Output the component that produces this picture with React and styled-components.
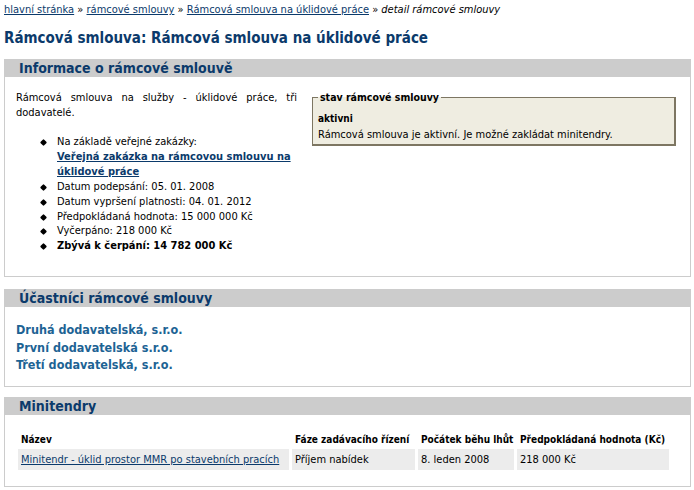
import React from "react";
import styled, { createGlobalStyle } from "styled-components";

const Global = createGlobalStyle`
  html, body { margin: 0; padding: 0; background: #fff; }
  body {
    font-family: "DejaVu Sans Condensed", "DejaVu Sans", sans-serif;
    font-stretch: condensed;
    color: #000;
    font-size: 11px;
  }
`;

const Page = styled.div`
  padding: 3px 3px 0 4px;
`;

const Crumbs = styled.div`
  font-size: 11px;
  line-height: 14px;
  a { color: #0b3a6b; }
  em { font-style: italic; }
`;

const Title = styled.h1`
  margin: 11px 0 0 0;
  font-size: 15px;
  line-height: 20px;
  font-weight: bold;
  color: #0b3a6b;
`;

const Section = styled.section`
  margin-top: ${(p) => p.$top}px;
`;

const Head = styled.h2`
  margin: 0;
  height: 18px;
  line-height: 18px;
  padding-left: 15px;
  background: #cccccc;
  color: #0b3a6b;
  font-size: 14px;
  font-weight: bold;
`;

const Body = styled.div`
  border: 1px solid #cccccc;
  border-top: none;
  padding: ${(p) => p.$pad};
  min-height: ${(p) => p.$min || 0}px;
  box-sizing: border-box;
`;

const InfoRow = styled.div`
  display: flex;
  align-items: flex-start;
  gap: 15px;
`;

const LeftCol = styled.div`
  width: 281px;
  flex: none;
`;

const Para = styled.p`
  margin: 0;
  text-align: justify;
  line-height: 15px;
`;

const Bullets = styled.ul`
  margin: 15px 0 0 0;
  padding-left: 25px;
  list-style: none;
`;

const Item = styled.li`
  position: relative;
  line-height: 14.9px;
  padding-left: 16px;
  font-weight: ${(p) => (p.$bold ? "bold" : "normal")};
  &::before {
    content: "";
    position: absolute;
    left: 0;
    top: 5px;
    width: 5px;
    height: 5px;
    background: #000;
    transform: rotate(45deg);
    border-radius: 1px;
  }
  a { color: #0b3a6b; font-weight: bold; }
`;

const Fieldset = styled.fieldset`
  margin: 1px 0 0 0;
  width: 364px;
  box-sizing: border-box;
  padding: 8px 6px 1px 5px;
  background: #efede1;
  border-style: solid;
  border-width: 1px 2px 2px 1px;
  border-color: #7d7662;
  legend {
    font-weight: bold;
    font-size: 10.5px;
    padding: 0 2px;
    margin-left: 0;
  }
  strong { display: block; font-size: 10px; line-height: 16px; }
  div { line-height: 16px; }
`;

const Participants = styled.div`
  display: flex;
  flex-direction: column;
  a {
    color: #1d6394;
    font-weight: bold;
    font-size: 12.5px;
    line-height: 17.5px;
    text-decoration: none;
  }
`;

const Table = styled.table`
  border-collapse: separate;
  border-spacing: 3px 0;
  margin-left: -1px;
  table-layout: fixed;
  th {
    text-align: left;
    font-weight: bold;
    font-size: 10px;
    line-height: 15px;
    padding: 0 0 2px 3px;
    white-space: nowrap;
  }
  td {
    background: #ececec;
    height: 21px;
    padding: 0 3px;
    white-space: nowrap;
  }
  td a { color: #0b3a6b; }
`;

const Col = styled.col`
  width: ${(p) => p.$w}px;
`;

export default function App() {
  return (
    <Page>
      <Global />
      <Crumbs>
        <a href="#">hlavní stránka</a> » <a href="#">rámcové smlouvy</a> »{" "}
        <a href="#">Rámcová smlouva na úklidové práce</a> » <em>detail rámcové smlouvy</em>
      </Crumbs>
      <Title>Rámcová smlouva: Rámcová smlouva na úklidové práce</Title>

      <Section $top={11}>
        <Head>Informace o rámcové smlouvě</Head>
        <Body $pad="13px 14px 14px 11px" $min={200}>
          <InfoRow>
            <LeftCol>
              <Para>Rámcová smlouva na služby - úklidové práce, tři dodavatelé.</Para>
              <Bullets>
                <Item>
                  Na základě veřejné zakázky:
                  <br />
                  <a href="#">Veřejná zakázka na rámcovou smlouvu na úklidové práce</a>
                </Item>
                <Item>Datum podepsání: 05. 01. 2008</Item>
                <Item>Datum vypršení platnosti: 04. 01. 2012</Item>
                <Item>Předpokládaná hodnota: 15 000 000 Kč</Item>
                <Item>Vyčerpáno: 218 000 Kč</Item>
                <Item $bold>Zbývá k čerpání: 14 782 000 Kč</Item>
              </Bullets>
            </LeftCol>
            <Fieldset>
              <legend>stav rámcové smlouvy</legend>
              <strong>aktivni</strong>
              <div>Rámcová smlouva je aktivní. Je možné zakládat minitendry.</div>
            </Fieldset>
          </InfoRow>
        </Body>
      </Section>

      <Section $top={12}>
        <Head>Účastníci rámcové smlouvy</Head>
        <Body $pad="14px 11px 12px 11px" $min={79}>
          <Participants>
            <a href="#">Druhá dodavatelská, s.r.o.</a>
            <a href="#">První dodavatelská s.r.o.</a>
            <a href="#">Třetí dodavatelská, s.r.o.</a>
          </Participants>
        </Body>
      </Section>

      <Section $top={10}>
        <Head>Minitendry</Head>
        <Body $pad="17px 11px 13px 11px" $min={72}>
          <Table>
            <colgroup>
              <Col $w={271} />
              <Col $w={123} />
              <Col $w={96} />
              <Col $w={152} />
            </colgroup>
            <thead>
              <tr>
                <th>Název</th>
                <th>Fáze zadávacího řízení</th>
                <th>Počátek běhu lhůt</th>
                <th>Předpokládaná hodnota (Kč)</th>
              </tr>
            </thead>
            <tbody>
              <tr>
                <td><a href="#">Minitendr - úklid prostor MMR po stavebních pracích</a></td>
                <td>Příjem nabídek</td>
                <td>8. leden 2008</td>
                <td>218 000 Kč</td>
              </tr>
            </tbody>
          </Table>
        </Body>
      </Section>
    </Page>
  );
}
